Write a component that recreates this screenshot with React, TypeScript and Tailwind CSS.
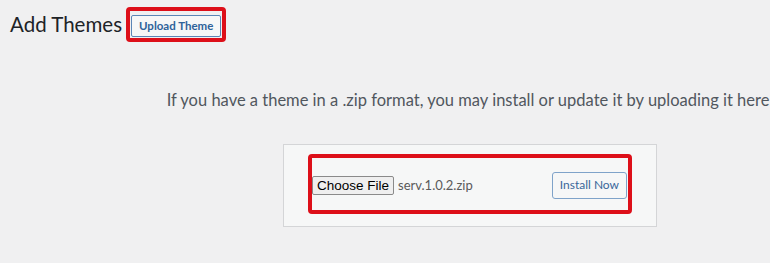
const ui = { fontFamily: 'Lato, "Noto Sans", Arial, sans-serif' };
const arial = { fontFamily: '"Liberation Sans", Arial, sans-serif' };

function Marked({ children, className }: { children: React.ReactNode; className?: string }) {
  return (
    <div className={`rounded-[4px] border-4 border-[#dd0f19] ${className ?? ""}`}>{children}</div>
  );
}

export default function App() {
  return (
    <div className="h-[263px] w-[770px] overflow-hidden bg-[#f0f0f1]" style={ui}>
      <div className="w-[940px]">
        <div className="flex items-center pt-[7px] pl-[10px]">
          <h1 className="mr-[4px] text-[20.5px] leading-[32px] text-[#1d2327]">Add Themes</h1>
          <Marked className="p-px">
            <button
              type="button"
              className="h-[22px] rounded-[2px] border border-[#5b86b6] bg-[#f6f7f7] px-[7px] text-[11.5px] font-bold text-[#2e639a]"
            >
              Upload Theme
            </button>
          </Marked>
        </div>

        <p className="mt-[46px] text-center text-[16.5px] whitespace-nowrap text-[#50575e]">
          If you have a theme in a .zip format, you may install or update it by uploading it here.
        </p>

        <div className="mx-auto mt-[32px] w-[374px] border border-[#d4d5d7] bg-[#f6f7f7] pt-[9px] pb-[12px]">
          <Marked className="mx-[24px] flex h-[60px] items-center justify-between pr-px">
            <div className="flex items-center gap-[4px] pt-[3px]">
              <button
                type="button"
                className="h-[19px] rounded-[2px] border border-[#8a8a8a] bg-[#efefef] px-[4px] text-[13.5px] leading-none text-black"
                style={arial}
              >
                Choose File
              </button>
              <span className="text-[13px] text-[#5a5a5a]">serv.1.0.2.zip</span>
            </div>
            <button
              type="button"
              className="mt-[2px] h-[27px] rounded-[3px] border border-[#7fa3c9] bg-[#f6f7f7] px-[7px] text-[12px] text-[#3a679a]"
            >
              Install Now
            </button>
          </Marked>
        </div>
      </div>
    </div>
  );
}
